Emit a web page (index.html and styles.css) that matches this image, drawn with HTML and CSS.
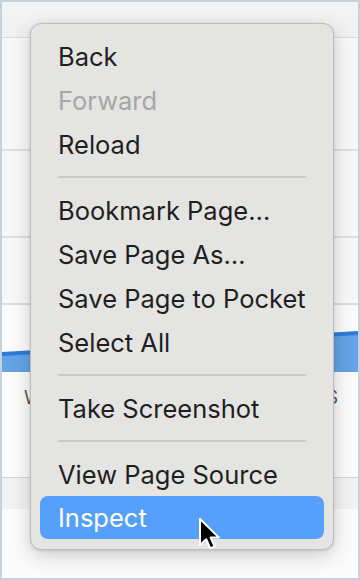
FILE: index.html
```html
<!DOCTYPE html>
<html>
<head>
<meta charset="utf-8">
<link rel="stylesheet" href="styles.css">
</head>
<body>
<div class="frame">
  <div class="bg">
    <div class="topband"></div>
    <div class="band h112"></div>
    <div class="band h86"></div>
    <div class="band h66"></div>
    <svg class="chart" width="356" height="42" viewBox="0 0 356 42">
      <polygon points="0,24 356,3 356,42 0,42" fill="#64a3e6"/>
      <polyline points="0,24 356,3" stroke="#2c7dd8" stroke-width="4" fill="none"/>
    </svg>
    <div class="labels"><span>W</span><span>S</span></div>
    <div class="spacer"></div>
    <div class="bottomband"></div>
  </div>

  <div class="menu">
    <div class="item">Back</div>
    <div class="item disabled">Forward</div>
    <div class="item">Reload</div>
    <div class="sep"></div>
    <div class="item">Bookmark Page…</div>
    <div class="item">Save Page As…</div>
    <div class="item">Save Page to Pocket</div>
    <div class="item">Select All</div>
    <div class="sep"></div>
    <div class="item">Take Screenshot</div>
    <div class="sep"></div>
    <div class="item">View Page Source</div>
    <div class="item active">Inspect</div>
  </div>

  <svg class="cursor" width="28" height="38" viewBox="0 0 28 38">
    <path d="M3 3 V29 L9.2 23.2 L13.3 32.3 L17.6 30.4 L13.6 21.6 H22 Z" fill="#000" stroke="#fff" stroke-width="2" stroke-linejoin="round"/>
  </svg>
</div>
</body>
</html>
```

FILE: styles.css
```css
* { box-sizing: border-box; }
html, body { margin: 0; padding: 0; }
body {
  width: 360px;
  height: 580px;
  overflow: hidden;
  font-family: Inter, "Noto Sans", sans-serif;
}
.frame {
  position: relative;
  width: 360px;
  height: 580px;
  border: 2px solid #c4d2de;
  background: #fbfbfb;
  overflow: hidden;
}
.bg {
  display: flex;
  flex-direction: column;
  height: 100%;
}
.topband {
  height: 36px;
  flex: none;
  background: linear-gradient(#f4f4f4, #f0f0f0);
  border-bottom: 1px solid #dcdcdc;
}
.band {
  flex: none;
  border-bottom: 2px solid #dedede;
  background: linear-gradient(90deg, #f7f7f7, #fdfdfd 40%, #f7f7f7);
}
.h112 { height: 113px; }
.h86 { height: 87px; }
.h66 { height: 67px; }
.chart {
  display: block;
  flex: none;
  margin-top: 25px;
}
.labels {
  flex: none;
  height: 44px;
  display: flex;
  justify-content: space-between;
  align-items: center;
  padding: 6px 20px 0 22px;
  font-size: 18px;
  color: #555;
}
.spacer {
  flex: none;
  height: 62px;
  border-bottom: 1px solid #d4d4d4;
}
.bottomband {
  flex: none;
  height: 31px;
  background: #f2f2f2;
}
.menu {
  position: absolute;
  left: 28px;
  top: 21px;
  width: 304px;
  padding: 10px 9px 10px;
  background: #e4e4e3;
  border: 1px solid #bdbdbd;
  border-radius: 11px;
  box-shadow: 0 6px 20px rgba(0, 0, 0, 0.18), 0 1px 3px rgba(0, 0, 0, 0.12);
  display: flex;
  flex-direction: column;
}
.item {
  height: 44px;
  display: flex;
  align-items: center;
  padding-left: 18px;
  font-size: 25.5px;
  color: #1f1f1f;
  white-space: nowrap;
  border-radius: 8px;
}
.item.disabled { color: #a6a6a6; }
.item.active {
  background: #56a0fd;
  color: #fff;
  height: 43px;
}
.sep {
  height: 22px;
  display: flex;
  align-items: center;
  padding: 0 18px;
}
.sep::before {
  content: "";
  display: block;
  width: 100%;
  height: 2px;
  background: #c9c9c8;
}
.cursor {
  position: absolute;
  left: 195px;
  top: 514px;
}
```
